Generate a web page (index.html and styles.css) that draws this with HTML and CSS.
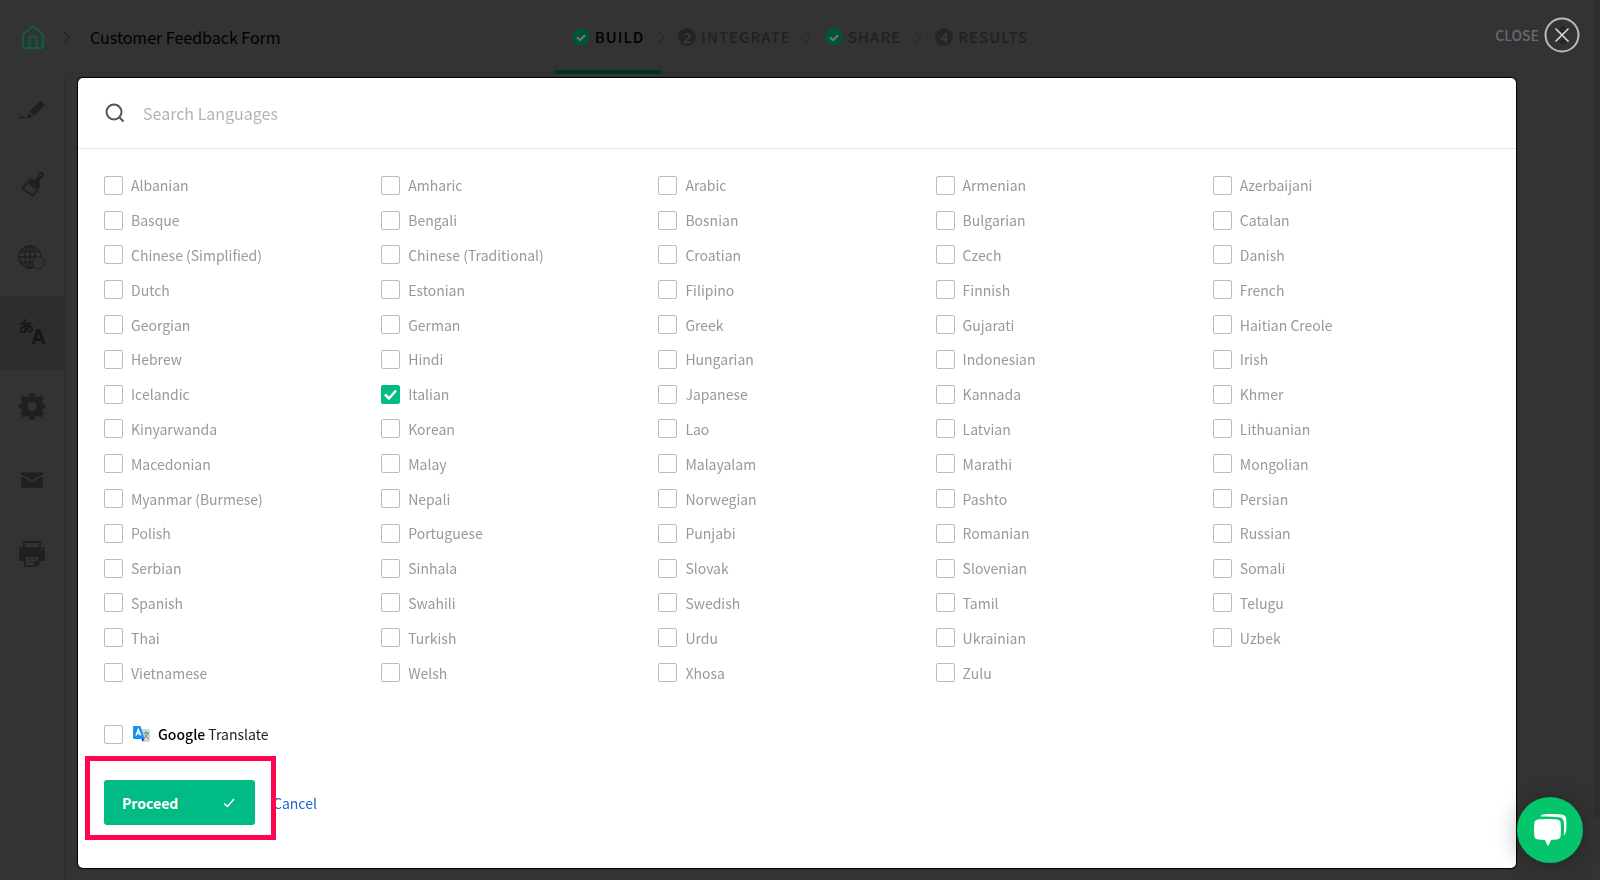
FILE: index.html
```html
<!DOCTYPE html>
<html lang="en">
<head>
  <meta charset="utf-8">
  <title>Customer Feedback Form</title>
  <link rel="stylesheet" href="styles.css">
</head>
<body>

<header class="topbar">
  <nav class="crumbs">
    <a href="#" class="home" aria-label="Home">
      <svg width="24" height="26" viewBox="0 0 24 26" fill="none" stroke="currentColor" stroke-width="2" stroke-linejoin="round"><path d="M2 10.500 12 2l10 8.500V22a2 2 0 0 1-2 2H4a2 2 0 0 1-2-2z"/><path d="M8.500 24V14a1.500 1.500 0 0 1 1.500-1.500h4a1.500 1.500 0 0 1 1.500 1.500v10"/></svg>
    </a>
    <svg class="chev" width="8" height="14" viewBox="0 0 8 14"><path d="M1 1l6 6-6 6"/></svg>
    <span class="form-name">Customer Feedback Form</span>
  </nav>
  <nav class="steps">
    <a href="#" class="step current"><svg class="dot done" width="18" height="18" viewBox="0 0 18 18"><circle cx="9" cy="9" r="9"/><path d="M5 9.200l3 3 5-5"/></svg>BUILD</a>
    <svg class="chev dim" width="8" height="14" viewBox="0 0 8 14"><path d="M1 1l6 6-6 6"/></svg>
    <a href="#" class="step"><span class="dot">2</span>INTEGRATE</a>
    <svg class="chev dim" width="8" height="14" viewBox="0 0 8 14"><path d="M1 1l6 6-6 6"/></svg>
    <a href="#" class="step"><svg class="dot done" width="18" height="18" viewBox="0 0 18 18"><circle cx="9" cy="9" r="9"/><path d="M5 9.200l3 3 5-5"/></svg>SHARE</a>
    <svg class="chev dim" width="8" height="14" viewBox="0 0 8 14"><path d="M1 1l6 6-6 6"/></svg>
    <a href="#" class="step"><span class="dot">4</span>RESULTS</a>
  </nav>
  <div class="closer">
    <button type="button" class="close">CLOSE
      <svg width="36" height="36" viewBox="0 0 36 36" fill="none"><circle cx="19" cy="12.500" r="2" stroke="#111"/><circle cx="19" cy="25" r="2" stroke="#111"/><circle cx="18" cy="18" r="16.500" stroke="#bbb" stroke-width="2"/><path d="M11.500 11.500l13 13M24.500 11.500l-13 13" stroke="#ddd" stroke-width="1.500"/></svg>
    </button>
  </div>
</header>

<nav class="sidebar">
  <a href="#" aria-label="Edit"><svg width="28" height="28" viewBox="0 0 28 28"><path d="M11.500 15.500 22.500 4.500l4.500 4.500L16 20zM10.500 17l4.500 4-6.500 1.500zM1 20.500h6v2H1z"/></svg></a>
  <a href="#" aria-label="Design"><svg width="28" height="28" viewBox="0 0 28 28"><path fill-rule="evenodd" d="M16.500 10 20 6c-.5-3 2-5 4-4 3 1 2.500 5-.5 6l-2.500 4c2 2 2 3 1 5l-7 10L3 19l7.500-9.500c1.500-1.200 4-1 6 .5zM11 12l-5 6.500 8.500 5.500 3-4-1-3-2 2-1-4-2 2zM22.500 4a1 1 0 1 0 .1 0z"/></svg></a>
  <a href="#" aria-label="Domain"><svg width="28" height="28" viewBox="0 0 28 28" fill="none" stroke="currentColor" stroke-width="1.500"><circle cx="12" cy="13" r="11"/><ellipse cx="12" cy="13" rx="5" ry="11"/><path d="M12 2v22M1 13h22M3 7.500h18M3 18.500h18"/><circle cx="20.500" cy="18.500" r="6" class="blank"/></svg></a>
  <a href="#" class="active" aria-label="Languages"><svg width="28" height="28" viewBox="0 0 28 28"><path d="M2 5.500c4 .4 8 .2 11-.8M6.500 1c-.8 5 0 9 2 13M11.500 6.500c-1 4-4 8-7 8-3.500 0-2.500-5 2.500-6.500 5-1.300 8 1 7 3.500-.5 1.700-2 2.500-3.500 2.500" fill="none" stroke="currentColor" stroke-width="2"/><path fill-rule="evenodd" d="M13.500 26l5-15h4l5 15h-3.500l-1-3h-5l-1 3zM19 20h3L20.500 15.500z"/></svg></a>
  <a href="#" aria-label="Settings"><svg width="28" height="28" viewBox="0 0 28 28"><path fill-rule="evenodd" d="M11.500 1h5l1 3.500 2 .8 3.200-1.800 3 3-1.500 3.500.8 2 2.500 1v3l-2.500 1-.8 2 1.500 3.500-3 3-3.200-1.800-2 .8-1 3.500h-5l-1-3.500-2-.8L5.300 25.500l-3-3L4 19l-.8-2L.5 16v-3L3.200 12 4 10 2.300 6.500l3-3 3.200 1.800 2-.8zM14 9.500a4.500 4.500 0 1 0 .1 0z"/></svg></a>
  <a href="#" aria-label="Email"><svg width="28" height="28" viewBox="0 0 28 28"><path d="M3 6.500h22v2L14 14 3 8.500zM3 10.500 14 16l11-5.500V21a1 1 0 0 1-1 1H4a1 1 0 0 1-1-1z"/></svg></a>
  <a href="#" aria-label="Print"><svg width="28" height="28" viewBox="0 0 28 28"><path fill-rule="evenodd" d="M5 1h18v6h2a2 2 0 0 1 2 2v12h-5c0 3-2 6-5 6H6v-6H1V9a2 2 0 0 1 2-2h2zM7 3v4h14V3zM8 17v8h8v-4h4v-4zM23.500 8.500a1 1 0 1 0 .1 0z"/><path d="M10 18.500h8v1h-8zM10 21.500h5v1h-5z"/></svg></a>
</nav>

<div class="scrollbar"></div>

<main class="overlay">
  <form class="modal">
    <div class="search">
      <svg width="20" height="20" viewBox="0 0 20 20" fill="none" stroke="#4f5660" stroke-width="2"><circle cx="9" cy="9" r="7.500"/><path d="M14.500 14.500l4 4"/></svg>
      <input type="search" placeholder="Search Languages" aria-label="Search Languages">
    </div>

    <div class="languages">
      <label><input type="checkbox">Albanian</label>
      <label><input type="checkbox">Amharic</label>
      <label><input type="checkbox">Arabic</label>
      <label><input type="checkbox">Armenian</label>
      <label><input type="checkbox">Azerbaijani</label>

      <label><input type="checkbox">Basque</label>
      <label><input type="checkbox">Bengali</label>
      <label><input type="checkbox">Bosnian</label>
      <label><input type="checkbox">Bulgarian</label>
      <label><input type="checkbox">Catalan</label>

      <label><input type="checkbox">Chinese (Simplified)</label>
      <label><input type="checkbox">Chinese (Traditional)</label>
      <label><input type="checkbox">Croatian</label>
      <label><input type="checkbox">Czech</label>
      <label><input type="checkbox">Danish</label>

      <label><input type="checkbox">Dutch</label>
      <label><input type="checkbox">Estonian</label>
      <label><input type="checkbox">Filipino</label>
      <label><input type="checkbox">Finnish</label>
      <label><input type="checkbox">French</label>

      <label><input type="checkbox">Georgian</label>
      <label><input type="checkbox">German</label>
      <label><input type="checkbox">Greek</label>
      <label><input type="checkbox">Gujarati</label>
      <label><input type="checkbox">Haitian Creole</label>

      <label><input type="checkbox">Hebrew</label>
      <label><input type="checkbox">Hindi</label>
      <label><input type="checkbox">Hungarian</label>
      <label><input type="checkbox">Indonesian</label>
      <label><input type="checkbox">Irish</label>

      <label><input type="checkbox">Icelandic</label>
      <label><input type="checkbox" checked>Italian</label>
      <label><input type="checkbox">Japanese</label>
      <label><input type="checkbox">Kannada</label>
      <label><input type="checkbox">Khmer</label>

      <label><input type="checkbox">Kinyarwanda</label>
      <label><input type="checkbox">Korean</label>
      <label><input type="checkbox">Lao</label>
      <label><input type="checkbox">Latvian</label>
      <label><input type="checkbox">Lithuanian</label>

      <label><input type="checkbox">Macedonian</label>
      <label><input type="checkbox">Malay</label>
      <label><input type="checkbox">Malayalam</label>
      <label><input type="checkbox">Marathi</label>
      <label><input type="checkbox">Mongolian</label>

      <label><input type="checkbox">Myanmar (Burmese)</label>
      <label><input type="checkbox">Nepali</label>
      <label><input type="checkbox">Norwegian</label>
      <label><input type="checkbox">Pashto</label>
      <label><input type="checkbox">Persian</label>

      <label><input type="checkbox">Polish</label>
      <label><input type="checkbox">Portuguese</label>
      <label><input type="checkbox">Punjabi</label>
      <label><input type="checkbox">Romanian</label>
      <label><input type="checkbox">Russian</label>

      <label><input type="checkbox">Serbian</label>
      <label><input type="checkbox">Sinhala</label>
      <label><input type="checkbox">Slovak</label>
      <label><input type="checkbox">Slovenian</label>
      <label><input type="checkbox">Somali</label>

      <label><input type="checkbox">Spanish</label>
      <label><input type="checkbox">Swahili</label>
      <label><input type="checkbox">Swedish</label>
      <label><input type="checkbox">Tamil</label>
      <label><input type="checkbox">Telugu</label>

      <label><input type="checkbox">Thai</label>
      <label><input type="checkbox">Turkish</label>
      <label><input type="checkbox">Urdu</label>
      <label><input type="checkbox">Ukrainian</label>
      <label><input type="checkbox">Uzbek</label>

      <label><input type="checkbox">Vietnamese</label>
      <label><input type="checkbox">Welsh</label>
      <label><input type="checkbox">Xhosa</label>
      <label><input type="checkbox">Zulu</label>
    </div>

    <label class="google">
      <input type="checkbox">
      <svg width="18" height="16" viewBox="0 0 18 16"><path d="M7 3h9a1 1 0 0 1 1 1v11a1 1 0 0 1-1 1h-6z" fill="#cfd8dc"/><path d="M10.500 7h5.500M13 5.500V7M15 7c-.5 2.500-2 4-4 5M12 8.500c.7 1.700 2 3 4 4" fill="none" stroke="#607d8b"/><path d="M1 0h6.500L11.500 13H1a1 1 0 0 1-1-1V1a1 1 0 0 1 1-1z" fill="#1193f5"/><path d="M8.500 13h3L9.500 16z" fill="#3030c8"/><path d="M3 9.500l2.300-6 2.300 6M3.800 7.500h3" fill="none" stroke="#fff" stroke-width="1.500"/></svg>
      <span><b>Google</b> Translate</span>
    </label>

    <div class="actions">
      <div class="highlight">
        <button type="submit" class="proceed">Proceed
          <svg width="12" height="10" viewBox="0 0 12 10" fill="none" stroke="#fff" stroke-width="1.500"><path d="M1 5.500l3.500 3L11 1"/></svg>
        </button>
      </div>
      <a href="#" class="cancel">Cancel</a>
    </div>
  </form>
</main>

<button type="button" class="chat" aria-label="Chat">
  <svg width="36" height="34" viewBox="0 0 36 34" fill="#fff"><path d="M6 6.500c5-.8 14-.8 19 0 2.500.3 3.500 1.500 3.700 4 .4 4 .4 8 0 12-.2 2.500-1.200 3.700-3.700 4l-6 .5-2.500 5.500h-1L13 27l-7-.5c-2.500-.3-3.500-1.500-3.700-4-.4-4-.4-8 0-12 .2-2.500 1.200-3.700 3.700-4z"/><path d="M8.500 3.500c1-1.500 2-2 4-2.200 5-.5 12-.4 17 .3 3 .4 4.500 1.600 4.700 4.600.4 4 .3 7 0 11-.2 2.500-1 4-2.500 5 .5-5 .6-8 .1-13-.2-3-1.500-4.500-4.800-5-6-.8-12-.9-18.500-.7z"/></svg>
</button>

</body>
</html>
```
FILE: styles.css
```css
* {
  box-sizing: border-box;
}

body {
  margin: 0;
  min-height: 100vh;
  background: #333;
  color: #000;
  font-family: "Noto Sans CJK SC", "Noto Sans", sans-serif;
  font-size: 14px;
  line-height: 20px;
}

a {
  color: inherit;
  text-decoration: none;
}

button {
  border: 0;
  padding: 0;
  background: none;
  font: inherit;
  cursor: pointer;
}

svg {
  flex: none;
}

/* top bar */
.topbar {
  display: grid;
  grid-template-columns: 1fr auto 1fr;
  height: 74px;
  border-bottom: 1px solid #303030;
}

.crumbs {
  display: flex;
  align-items: center;
  gap: 17px;
  padding-left: 21px;
  font-size: 16px;
}

.home {
  display: flex;
  color: #0d5d44;
}

.form-name {
  padding-left: 3px;
}

.chev {
  fill: none;
  stroke: #1d1d1d;
}

.chev.dim {
  stroke: #222;
}

.steps {
  display: flex;
  align-items: center;
  font-size: 15px;
  font-weight: 500;
  letter-spacing: 1px;
  color: #212121;
}

.step {
  position: relative;
  display: flex;
  align-items: center;
  gap: 5px;
  height: 74px;
  padding: 0 13px;
}

.step.current {
  color: #000;
}

.step.current::after {
  content: "";
  position: absolute;
  left: -4px;
  right: -4px;
  bottom: 0;
  height: 4px;
  background: #003223;
}

.dot {
  width: 18px;
  height: 18px;
  border-radius: 9px;
  background: #242424;
  color: #3c3c3c;
  font-size: 14px;
  line-height: 18px;
  text-align: center;
  letter-spacing: 0;
}

.dot.done {
  background: none;
  fill: #00543a;
  stroke: none;
}

.dot.done path {
  fill: none;
  stroke: #777;
  stroke-width: 2;
}

.closer {
  display: flex;
  justify-content: flex-end;
  padding: 17px 20px 0 0;
}

.close {
  display: flex;
  align-items: center;
  align-self: flex-start;
  gap: 5px;
  color: #666b73;
  font-weight: 500;
}

/* side bar */
.sidebar {
  width: 65px;
  min-height: calc(100vh - 74px);
  border-right: 1px solid #2e2e2e;
  color: #1e2022;
}

.sidebar a {
  display: flex;
  align-items: center;
  justify-content: center;
  height: 74px;
  padding-bottom: 2px;
}

.sidebar a.active {
  background: #2d2d2d;
  color: #16181a;
}

.sidebar svg {
  fill: currentColor;
}

.sidebar svg[fill="none"] {
  fill: none;
}

.blank {
  fill: #333;
  stroke-width: 1;
}

.scrollbar {
  position: fixed;
  top: 0;
  right: 0;
  width: 6px;
  height: 93%;
  background: #2e2e2e;
}

/* language picker */
.overlay {
  position: absolute;
  top: 0;
  left: 0;
  right: 0;
  min-height: 100vh;
  display: flex;
  padding: 78px 84px 12px 78px;
  pointer-events: none;
}

.modal {
  flex: 1;
  display: flex;
  flex-direction: column;
  border-radius: 5px;
  background: #fff;
  box-shadow: 0 0 1px 1px #000;
  pointer-events: auto;
}

.search {
  display: flex;
  align-items: center;
  gap: 16px;
  height: 71px;
  padding: 0 27px 1px;
  border-bottom: 1px solid #e4e4e4;
}

.search input {
  flex: 1;
  border: 0;
  outline: 0;
  font: inherit;
  font-size: 16px;
}

.search input::placeholder {
  color: #b4b4b4;
}

.languages {
  flex: 1;
  display: grid;
  grid-template-columns: repeat(5, 1fr);
  grid-auto-rows: 1fr;
  padding: 19px 26px 0;
  color: #999;
}

.languages label,
.google {
  display: flex;
  align-items: center;
  gap: 8px;
}

input[type="checkbox"] {
  appearance: none;
  flex: none;
  width: 19px;
  height: 19px;
  margin: 0;
  border: 1px solid #bbb;
  border-radius: 2px;
  background: #fff;
}

input[type="checkbox"]:checked {
  border-color: #00bb83;
  background: #00bb83 url("data:image/svg+xml,%3Csvg xmlns='http://www.w3.org/2000/svg' viewBox='0 0 17 17'%3E%3Cpath d='M3 8.500l4 4 7-8' fill='none' stroke='white' stroke-width='2.500'/%3E%3C/svg%3E");
}

.google {
  gap: 7px;
  padding: 34px 26px 0;
  color: #222;
}

.google svg {
  margin-left: 3px;
}

.google b {
  font-weight: 500;
  color: #000;
}

/* buttons */
.actions {
  display: flex;
  align-items: center;
  gap: 18px;
  padding: 36px 26px 43px;
}

.highlight {
  position: relative;
  z-index: 1;
}

.highlight::after {
  content: "";
  position: absolute;
  inset: -24px -21px -15px -19px;
  border: 5px solid #ff0550;
  pointer-events: none;
}

.proceed {
  display: flex;
  align-items: center;
  justify-content: space-between;
  width: 151px;
  height: 45px;
  padding: 0 20px 0 18px;
  border-radius: 3px;
  background: #00bb83;
  color: #fff;
  font-weight: 700;
}

.cancel {
  color: #2062d8;
}

.chat {
  position: fixed;
  right: 17px;
  bottom: 17px;
  display: flex;
  align-items: center;
  justify-content: center;
  width: 66px;
  height: 66px;
  border-radius: 50%;
  background: #04c56c;
  box-shadow: 0 2px 24px rgba(0, 0, 0, 0.3);
}
```
